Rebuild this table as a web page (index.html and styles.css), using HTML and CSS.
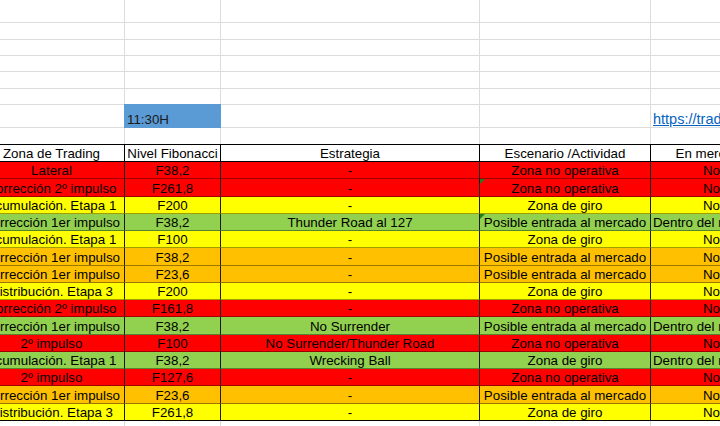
FILE: index.html
```html
<!DOCTYPE html>
<html lang="es">
<head>
<meta charset="utf-8">
<title>Zonas de Trading</title>
<link rel="stylesheet" href="styles.css">
</head>
<body>
<div class="sheet">
  <div class="row r23"><div class="cell"></div><div class="cell"></div><div class="cell"></div><div class="cell"></div><div class="cell"></div></div>
  <div class="row r17"><div class="cell"></div><div class="cell"></div><div class="cell"></div><div class="cell"></div><div class="cell"></div></div>
  <div class="row r16"><div class="cell"></div><div class="cell"></div><div class="cell"></div><div class="cell"></div><div class="cell"></div></div>
  <div class="row r16"><div class="cell"></div><div class="cell"></div><div class="cell"></div><div class="cell"></div><div class="cell"></div></div>
  <div class="row r17"><div class="cell"></div><div class="cell"></div><div class="cell"></div><div class="cell"></div><div class="cell"></div></div>
  <div class="row r16"><div class="cell"></div><div class="cell"></div><div class="cell"></div><div class="cell"></div><div class="cell"></div></div>
  <div class="row r23"><div class="cell"></div><div class="cell left time">11:30H</div><div class="cell"></div><div class="cell"></div><div class="cell left"><span class="link">https://tradingview.com</span></div></div>
  <div class="row r16 open"><div class="cell"></div><div class="cell"></div><div class="cell"></div><div class="cell"></div><div class="cell"></div></div>

  <div class="table">
    <div class="row head"><div class="cell">Zona de Trading</div><div class="cell">Nivel Fibonacci</div><div class="cell">Estrategia</div><div class="cell">Escenario /Actividad</div><div class="cell">En mercado</div></div>
    <div class="row data red"><div class="cell">Lateral</div><div class="cell">F38,2</div><div class="cell">-</div><div class="cell">Zona no operativa</div><div class="cell">No</div></div>
    <div class="row data red"><div class="cell">Corrección 2º impulso</div><div class="cell">F261,8</div><div class="cell">-</div><div class="cell flag">Zona no operativa</div><div class="cell">No</div></div>
    <div class="row data yellow"><div class="cell">Acumulación. Etapa 1</div><div class="cell">F200</div><div class="cell">-</div><div class="cell">Zona de giro</div><div class="cell">No</div></div>
    <div class="row data green"><div class="cell">Corrección 1er impulso</div><div class="cell">F38,2</div><div class="cell">Thunder Road al 127</div><div class="cell flag">Posible entrada al mercado</div><div class="cell">Dentro del mercado</div></div>
    <div class="row data yellow"><div class="cell">Acumulación. Etapa 1</div><div class="cell">F100</div><div class="cell">-</div><div class="cell">Zona de giro</div><div class="cell">No</div></div>
    <div class="row data orange"><div class="cell">Corrección 1er impulso</div><div class="cell">F38,2</div><div class="cell">-</div><div class="cell">Posible entrada al mercado</div><div class="cell">No</div></div>
    <div class="row data orange"><div class="cell">Corrección 1er impulso</div><div class="cell">F23,6</div><div class="cell">-</div><div class="cell">Posible entrada al mercado</div><div class="cell">No</div></div>
    <div class="row data yellow"><div class="cell">Distribución. Etapa 3</div><div class="cell">F200</div><div class="cell">-</div><div class="cell">Zona de giro</div><div class="cell">No</div></div>
    <div class="row data red"><div class="cell">Corrección 2º impulso</div><div class="cell">F161,8</div><div class="cell">-</div><div class="cell">Zona no operativa</div><div class="cell">No</div></div>
    <div class="row data green"><div class="cell">Corrección 1er impulso</div><div class="cell">F38,2</div><div class="cell">No Surrender</div><div class="cell">Posible entrada al mercado</div><div class="cell">Dentro del mercado</div></div>
    <div class="row data red"><div class="cell">2º impulso</div><div class="cell">F100</div><div class="cell">No Surrender/Thunder Road</div><div class="cell">Zona no operativa</div><div class="cell">No</div></div>
    <div class="row data green"><div class="cell">Acumulación. Etapa 1</div><div class="cell">F38,2</div><div class="cell">Wrecking Ball</div><div class="cell">Zona de giro</div><div class="cell">Dentro del mercado</div></div>
    <div class="row data red"><div class="cell">2º impulso</div><div class="cell">F127,6</div><div class="cell">-</div><div class="cell">Zona no operativa</div><div class="cell">No</div></div>
    <div class="row data orange"><div class="cell">Corrección 1er impulso</div><div class="cell">F23,6</div><div class="cell">-</div><div class="cell">Posible entrada al mercado</div><div class="cell">No</div></div>
    <div class="row data yellow last"><div class="cell">Distribución. Etapa 3</div><div class="cell">F261,8</div><div class="cell">-</div><div class="cell">Zona de giro</div><div class="cell">No</div></div>
  </div>

  <div class="row r16 open"><div class="cell"></div><div class="cell"></div><div class="cell"></div><div class="cell"></div><div class="cell"></div></div>
</div>
</body>
</html>
```

FILE: styles.css
```css
html, body {
  margin: 0;
  padding: 0;
  background: #ffffff;
  overflow: hidden;
}

body {
  width: 720px;
  height: 426px;
  font-family: "Liberation Sans", Arial, sans-serif;
  font-size: 13.33px;
  color: #000000;
}

.sheet {
  margin-left: -21px;
  width: 800px;
}

.row {
  display: grid;
  grid-template-columns: 146px 96px 259px 171px 122px;
}

.cell {
  box-sizing: border-box;
  border-right: 1px solid #dcdcdc;
  border-bottom: 1px solid #dcdcdc;
  display: flex;
  align-items: flex-end;
  justify-content: center;
  line-height: 13px;
  padding-bottom: 1px;
  white-space: nowrap;
  position: relative;
}

.cell.left {
  justify-content: flex-start;
  padding-left: 2px;
}

.r23 { height: 23px; }
.r17 { height: 17px; }
.r16 { height: 16px; }

.open .cell {
  border-bottom: none;
}

.time {
  background: #5b9bd5;
  border-right-color: #5b9bd5;
  border-bottom-color: #5b9bd5;
  box-shadow: -1px 0 0 #5b9bd5, 0 -1px 0 #5b9bd5, -1px -1px 0 #5b9bd5;
  color: #1a1a1a;
}

.link {
  color: #0563c1;
  text-decoration: underline;
  font-size: 14.5px;
}

.table {
  border-top: 1px solid #000000;
}

.head {
  height: 17px;
}

.head .cell {
  border-right: 1px solid #000000;
  border-bottom: 1px solid #000000;
}

.data {
  height: 17.25px;
}

.data .cell {
  border-right: 1px solid #1a1a1a;
  border-bottom: 1px solid rgba(0, 0, 0, 0.38);
}

.data.last .cell {
  border-bottom: 1px solid #000000;
}

.red { background: #ff0000; }
.yellow { background: #ffff00; }
.green { background: #92d050; }
.orange { background: #ffc000; }

.flag::before {
  content: "";
  position: absolute;
  top: 0;
  left: 0;
  border-top: 5px solid #1f7f1f;
  border-right: 5px solid transparent;
}
```
